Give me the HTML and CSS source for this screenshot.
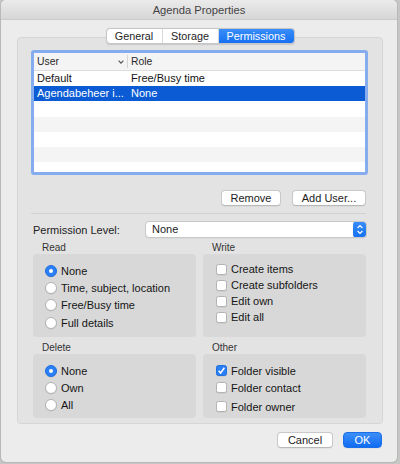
FILE: index.html
```html
<!DOCTYPE html>
<html>
<head>
<meta charset="utf-8">
<link rel="stylesheet" href="styles.css">
</head>
<body>
<div class="window">
  <div class="titlebar">Agenda Properties</div>
  <div class="main">
    <div class="tabs">
      <div class="seg seg-general">General</div>
      <div class="seg seg-storage">Storage</div>
      <div class="seg seg-perm active">Permissions</div>
    </div>
    <div class="tabbox">
      <div class="table">
        <div class="thead">
          <div class="th th-user"><span>User</span>
            <svg class="sortchev" width="6" height="4" viewBox="0 0 6 4"><polyline points="0.6,0.6 3,3.2 5.4,0.6" fill="none" stroke="#555" stroke-width="1.1"/></svg>
          </div>
          <div class="th th-role">Role</div>
        </div>
        <div class="tbody">
          <div class="tr"><div class="td td-user">Default</div><div class="td">Free/Busy time</div></div>
          <div class="tr selected"><div class="td td-user">Agendabeheer i...</div><div class="td">None</div></div>
          <div class="tr"></div>
          <div class="tr alt"></div>
          <div class="tr"></div>
          <div class="tr alt"></div>
          <div class="tr"></div>
        </div>
      </div>
      <div class="btnrow">
        <div class="btn btn-remove">Remove</div>
        <div class="btn btn-add">Add User...</div>
      </div>
      <div class="sep"></div>
      <div class="permrow">
        <div class="permlabel">Permission Level:</div>
        <div class="select">
          <span class="select-value">None</span>
          <span class="stepper">
            <svg width="14" height="17" viewBox="0 0 14 17"><polyline points="4.6,7 7,4.6 9.4,7" fill="none" stroke="#fff" stroke-width="1.2"/><polyline points="4.6,10 7,12.4 9.4,10" fill="none" stroke="#fff" stroke-width="1.2"/></svg>
          </span>
        </div>
      </div>
      <div class="groups groups-top">
        <div class="group">
          <div class="glabel">Read</div>
          <div class="gbox gbox-read">
            <div class="opt"><span class="radio on"></span>None</div>
            <div class="opt"><span class="radio"></span>Time, subject, location</div>
            <div class="opt"><span class="radio"></span>Free/Busy time</div>
            <div class="opt"><span class="radio"></span>Full details</div>
          </div>
        </div>
        <div class="group">
          <div class="glabel">Write</div>
          <div class="gbox gbox-write">
            <div class="chk"><span class="box"></span>Create items</div>
            <div class="chk"><span class="box"></span>Create subfolders</div>
            <div class="chk"><span class="box"></span>Edit own</div>
            <div class="chk"><span class="box"></span>Edit all</div>
          </div>
        </div>
      </div>
      <div class="groups groups-bottom">
        <div class="group">
          <div class="glabel">Delete</div>
          <div class="gbox gbox-delete">
            <div class="opt"><span class="radio on"></span>None</div>
            <div class="opt"><span class="radio"></span>Own</div>
            <div class="opt"><span class="radio"></span>All</div>
          </div>
        </div>
        <div class="group">
          <div class="glabel">Other</div>
          <div class="gbox gbox-other">
            <div class="chk"><span class="box on"><svg width="11" height="11" viewBox="0 0 11 11"><polyline points="2.6,5.8 4.6,8 8.4,2.8" fill="none" stroke="#fff" stroke-width="1.5"/></svg></span>Folder visible</div>
            <div class="chk"><span class="box"></span>Folder contact</div>
            <div class="chk chk-owner"><span class="box"></span>Folder owner</div>
          </div>
        </div>
      </div>
    </div>
    <div class="footer">
      <div class="btn btn-cancel">Cancel</div>
      <div class="btn btn-ok">OK</div>
    </div>
  </div>
</div>
</body>
</html>
```

FILE: styles.css
```css
* { box-sizing: border-box; }

body {
  margin: 0;
  width: 400px;
  height: 464px;
  background: #c4c7c4;
  font-family: "Liberation Sans", Arial, sans-serif;
  font-size: 11px;
  color: #1c1c1c;
  overflow: hidden;
}

.window {
  margin-left: 1px;
  width: 396px;
  height: 462px;
  background: #ececec;
  border-radius: 5px;
  overflow: hidden;
  display: flex;
  flex-direction: column;
  box-shadow: 0 0 0 1px #b8b8b8;
}

.titlebar {
  flex: none;
  height: 20px;
  border-bottom: 1px solid #cbcbcb;
  background: linear-gradient(#ebebeb, #d6d6d6);
  text-align: center;
  line-height: 21px;
  font-size: 11.2px;
  color: #444;
}

.main {
  display: flex;
  flex-direction: column;
  padding: 8px 14px 0 16px;
}

.tabs {
  align-self: center;
  display: flex;
  width: 189px;
  height: 16px;
  border: 1px solid #c6c6c6;
  border-radius: 4px;
  overflow: hidden;
  background: #fff;
  position: relative;
  z-index: 1;
  box-shadow: 0 0.5px 1px rgba(0,0,0,0.12);
}

.seg {
  height: 100%;
  line-height: 14px;
  text-align: center;
  font-size: 10.8px;
  color: #1e1e1e;
}

.seg-general, .seg-storage {
  width: 56px;
  border-right: 1px solid #d9d9d9;
}

.seg-perm { flex: 1; }

.seg.active {
  background: linear-gradient(#3a8ef8, #1570f1);
  color: #fff;
}

.tabbox {
  margin-top: -7px;
  height: 387px;
  background: #e3e3e3;
  border: 1px solid #d6d6d6;
  border-radius: 4px;
  padding: 12px 16px 0 13px;
  display: flex;
  flex-direction: column;
}

/* table */
.table {
  flex: none;
  margin-right: -2px;
  height: 125px;
  border: 3px solid #85acee;
  border-radius: 3px;
  background: #fff;
  overflow: hidden;
}

.thead {
  display: flex;
  height: 18px;
  background: #f4f4f4;
  border-bottom: 1px solid #dedede;
  font-size: 10.4px;
  color: #2a2a2a;
}

.th {
  line-height: 17px;
  padding-left: 3px;
}

.th-user {
  width: 94px;
  display: flex;
  align-items: center;
  justify-content: space-between;
  padding-right: 4px;
  position: relative;
}

.th-user::after {
  content: "";
  position: absolute;
  right: 0;
  top: 2px;
  bottom: 2px;
  width: 1px;
  background: #d4d4d4;
}

.sortchev { display: block; margin-top: 1px; }

.th-role { flex: 1; padding-left: 3px; }

.tbody { display: flex; flex-direction: column; }

.tr {
  flex: none;
  display: flex;
  height: 15.2px;
  line-height: 15px;
  color: #151515;
}

.tr.alt { background: #f4f4f5; }

.tr.selected {
  background: #0b5bd5;
  color: #fff;
}

.td { padding-left: 3px; white-space: nowrap; }

.td-user { width: 94px; padding-right: 2px; }

/* buttons */
.btnrow {
  margin-top: 15px;
  display: flex;
  justify-content: flex-end;
  gap: 11px;
}

.btn {
  height: 16px;
  line-height: 14px;
  text-align: center;
  background: #fff;
  border: 1px solid #c9c9c9;
  border-bottom-color: #b9b9b9;
  border-radius: 4px;
  color: #1c1c1c;
  box-shadow: 0 0.5px 0.5px rgba(0,0,0,0.08);
}

.btn-remove { width: 60px; }
.btn-add { width: 74px; }

.sep {
  margin-top: 7px;
  height: 1px;
  background: #d2d2d2;
}

.permrow {
  margin-top: 7px;
  display: flex;
  align-items: center;
  height: 17px;
}

.permlabel {
  width: 114px;
  padding-left: 2px;
}

.select {
  flex: 1;
  margin-right: -1px;
  height: 17px;
  display: flex;
  align-items: stretch;
  background: #fff;
  border: 1px solid #c9c9c9;
  border-radius: 4px;
  overflow: hidden;
  box-shadow: 0 0.5px 0.5px rgba(0,0,0,0.08);
}

.select-value {
  flex: 1;
  padding-left: 6px;
  line-height: 15px;
}

.stepper {
  width: 14px;
  margin: -1px -1px -1px 0;
  background: linear-gradient(#3a8ef8, #1570f1);
  border-radius: 4px;
  display: flex;
  align-items: center;
  justify-content: center;
}

.stepper svg { display: block; }

/* groups */
.groups {
  display: grid;
  grid-template-columns: 163px 163px;
  column-gap: 7px;
  margin-left: 2px;
}

.groups-top { margin-top: 4px; }
.groups-bottom { margin-top: 5px; }

.glabel {
  height: 12px;
  line-height: 12px;
  font-size: 10px;
  color: #333;
  padding-left: 9px;
}

.gbox {
  background: #d8d8d8;
  border-radius: 4px;
  display: flex;
  flex-direction: column;
}

.gbox-read { height: 83px; padding: 8px 0 0 12px; }
.gbox-write { height: 83px; padding: 7px 0 0 13px; }
.gbox-delete { height: 64px; padding: 8px 0 0 12px; }
.gbox-other { height: 64px; padding: 8px 0 0 13px; }

.opt {
  display: flex;
  align-items: center;
  height: 17.4px;
  gap: 4px;
  color: #151515;
}

.radio {
  width: 12px;
  height: 12px;
  border-radius: 50%;
  background: #fff;
  border: 1px solid #b3b3b3;
  box-shadow: 0 0.5px 0.5px rgba(0,0,0,0.1);
  flex: none;
  position: relative;
}

.radio.on {
  background: #2a7ef6;
  border-color: #1f6fe0;
}

.radio.on::after {
  content: "";
  position: absolute;
  left: 3px;
  top: 3px;
  width: 4px;
  height: 4px;
  border-radius: 50%;
  background: #fff;
}

.chk {
  display: flex;
  align-items: center;
  height: 16px;
  gap: 4px;
  color: #151515;
}

.gbox-other .chk { height: 17px; }
.gbox-other .chk-owner { margin-top: 2px; }

.box {
  width: 11px;
  height: 11px;
  border-radius: 2.5px;
  background: #fff;
  border: 1px solid #b3b3b3;
  box-shadow: 0 0.5px 0.5px rgba(0,0,0,0.1);
  flex: none;
}

.box svg { display: block; margin: -1px; }

.box.on {
  background: #2a7ef6;
  border-color: #1f6fe0;
}

.footer {
  margin-top: 8px;
  display: flex;
  justify-content: flex-end;
  gap: 10px;
  padding-right: 1px;
}

.btn-cancel { width: 56px; }

.btn-ok {
  width: 39px;
  background: linear-gradient(#3d8ff8, #0f6cf1);
  border-color: #1a6ee8;
  color: #fff;
}
```
